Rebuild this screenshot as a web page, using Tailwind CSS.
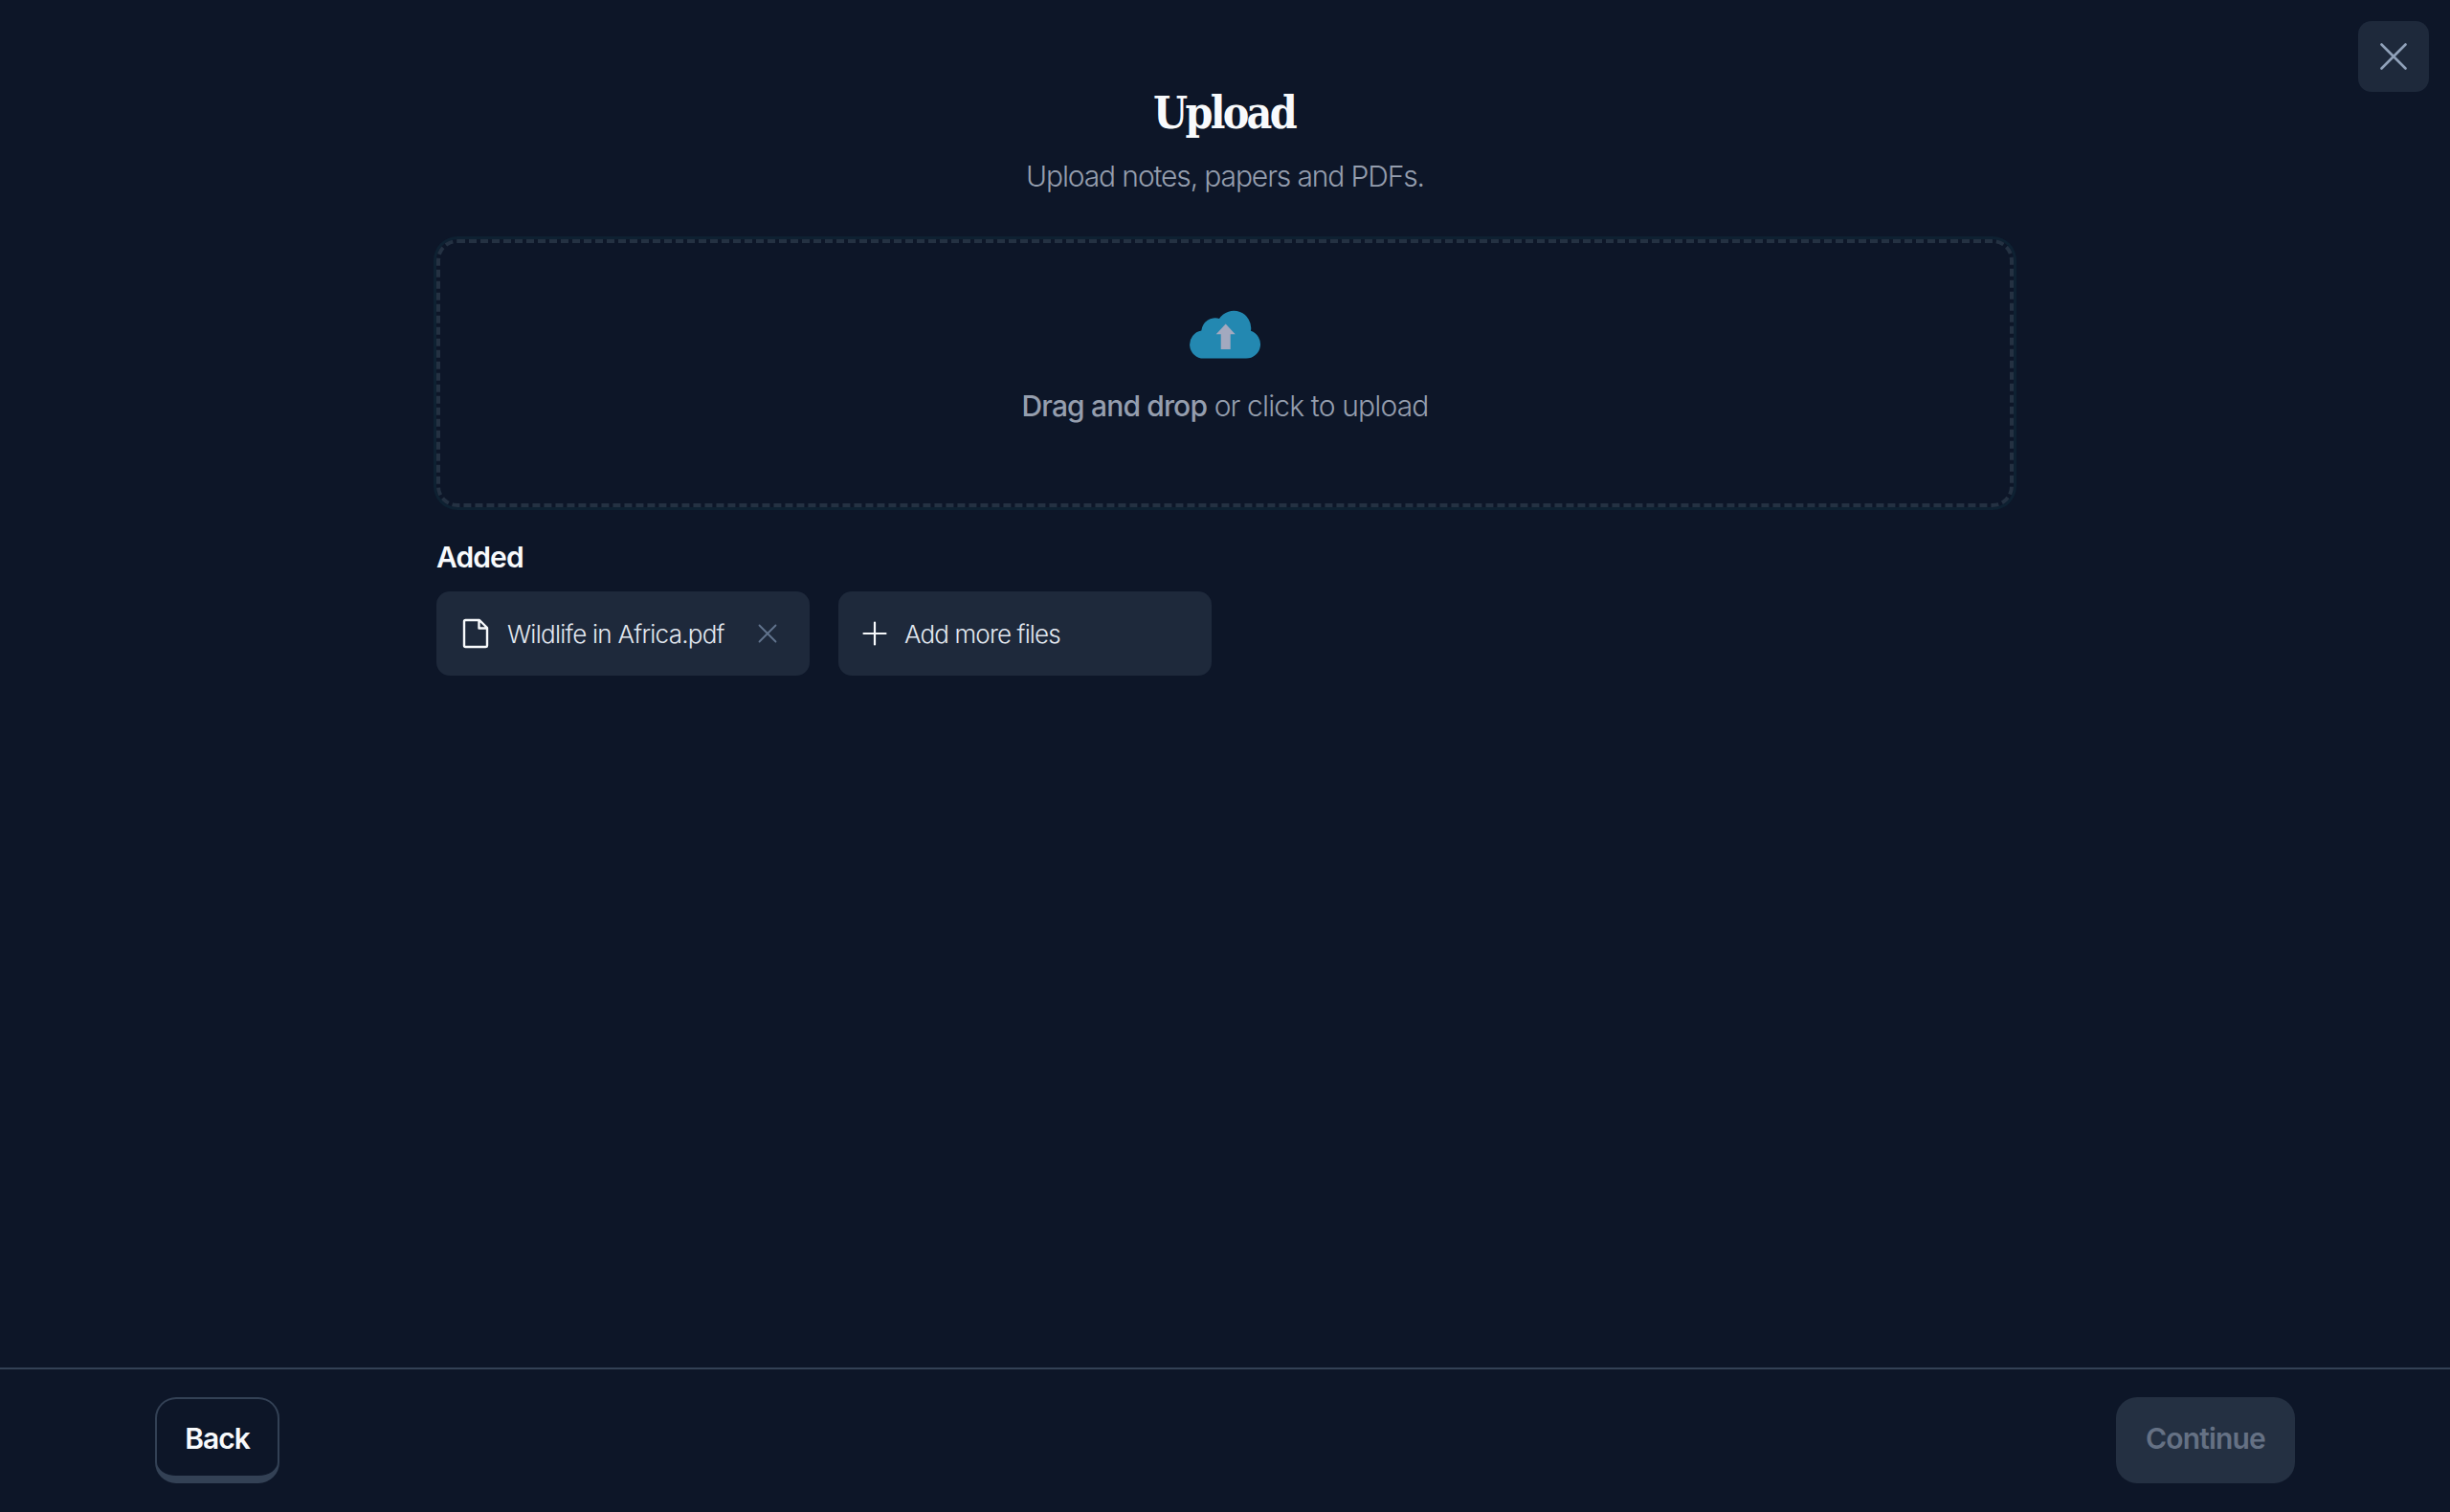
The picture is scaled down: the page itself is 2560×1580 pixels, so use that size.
<!DOCTYPE html>
<html lang="en">
<head>
    <meta charset="UTF-8">
    <meta name="viewport" content="width=device-width, initial-scale=1.0">
    <title>Upload</title>
    <script src="https://cdn.jsdelivr.net/npm/@tailwindcss/browser@4"></script>
</head>
<body class="relative flex h-screen flex-col overflow-hidden bg-[#0d1628] font-['Inter',sans-serif] text-slate-50">

    <!-- Close button -->
    <button class="absolute top-[22px] right-[22px] flex size-[74px] items-center justify-center rounded-[14px] bg-[#1e293b]" aria-label="Close">
        <svg class="size-7 text-slate-400" viewBox="0 0 28 28" fill="none" stroke="currentColor" stroke-width="2.6" stroke-linecap="round">
            <path d="M1.5 1.5l25 25M26.5 1.5l-25 25"/>
        </svg>
    </button>

    <!-- Content -->
    <main class="mx-auto w-[1648px] flex-1 pt-[88px]">
        <h1 class="pr-[2px] text-center font-['DejaVu_Serif_Condensed','DejaVu_Serif',serif] text-[46px] leading-[60px] font-bold tracking-[-2.7px]">Upload</h1>
        <p class="mt-[14px] text-center text-[30px] leading-[44px] font-light tracking-[-1.13px] text-[#959eae]">Upload notes, papers and PDFs.</p>

        <!-- Drop zone -->
        <div class="mt-11 flex h-[280px] flex-col items-center rounded-[22px] border-4 border-dashed border-[#243142] pt-[71px] shadow-[0_0_0_3px_#0e2132]">
            <svg class="h-[50px] w-[74px] overflow-visible" viewBox="0 0 74 50">
                <path fill="#2388b1" d="M14.600 49.600a14.600 14.600 0 0 1-2.300-29A14.500 14.500 0 0 1 31 8A18.100 18.100 0 0 1 64 20.800A14.800 14.800 0 0 1 59.200 49.600z"/>
                <path fill="#a3a9bf" d="M37.700 13.500l10 10.700h-5V40h-10V24.200h-5z"/>
            </svg>
            <p class="mt-[27px] text-[30px] leading-[44px] font-light tracking-[-0.85px] text-[#959eae]"><span class="font-medium">Drag and drop</span> or click to upload</p>
        </div>

        <!-- Added files -->
        <h2 class="mt-[30px] text-[30px] leading-[44px] font-semibold tracking-[-0.9px]">Added</h2>
        <div class="mt-[14px] flex gap-[30px]">
            <div class="flex h-[88px] w-[390px] items-center rounded-[14px] bg-[#1e293b] pl-[27px]">
                <svg class="h-8 w-7" viewBox="0 0 28 32" fill="none" stroke="currentColor" stroke-width="2.4" stroke-linejoin="round">
                    <path d="M3.500 2H18l8 8v18.500a1.500 1.500 0 0 1-1.500 1.500h-21A1.500 1.500 0 0 1 2 28.500v-25A1.500 1.500 0 0 1 3.500 2zM17.500 2v8.500H26"/>
                </svg>
                <span class="ml-[19px] w-[228px] text-[26px] font-light tracking-[-0.75px] whitespace-nowrap text-slate-200">Wildlife in Africa.pdf</span>
                <svg class="ml-[34px] size-5 text-slate-500" viewBox="0 0 20 20" fill="none" stroke="currentColor" stroke-width="1.8" stroke-linecap="round">
                    <path d="M1.500 1.500l17 17M18.500 1.500l-17 17"/>
                </svg>
            </div>
            <button class="flex h-[88px] w-[390px] items-center rounded-[14px] bg-[#1e293b] pl-[25px]">
                <svg class="size-[26px]" viewBox="0 0 26 26" fill="none" stroke="currentColor" stroke-width="2.2" stroke-linecap="round">
                    <path d="M13 1.500v23M1.500 13h23"/>
                </svg>
                <span class="ml-[18px] text-[26px] font-light tracking-[-0.87px] whitespace-nowrap text-slate-200">Add more files</span>
            </button>
        </div>
    </main>

    <!-- Footer -->
    <footer class="flex h-[151px] justify-between border-t-2 border-[#334155] px-[162px] pt-[29px]">
        <button class="h-[90px] w-[130px] rounded-[22px] border-2 border-b-8 border-[#334155] pt-[3px] text-[30px] font-semibold tracking-[-1px]">Back</button>
        <button class="h-[90px] w-[187px] rounded-[22px] bg-[#243042] pb-[3px] text-[30px] font-semibold tracking-[-0.85px] text-[#657184]" disabled>Continue</button>
    </footer>

</body>
</html>
